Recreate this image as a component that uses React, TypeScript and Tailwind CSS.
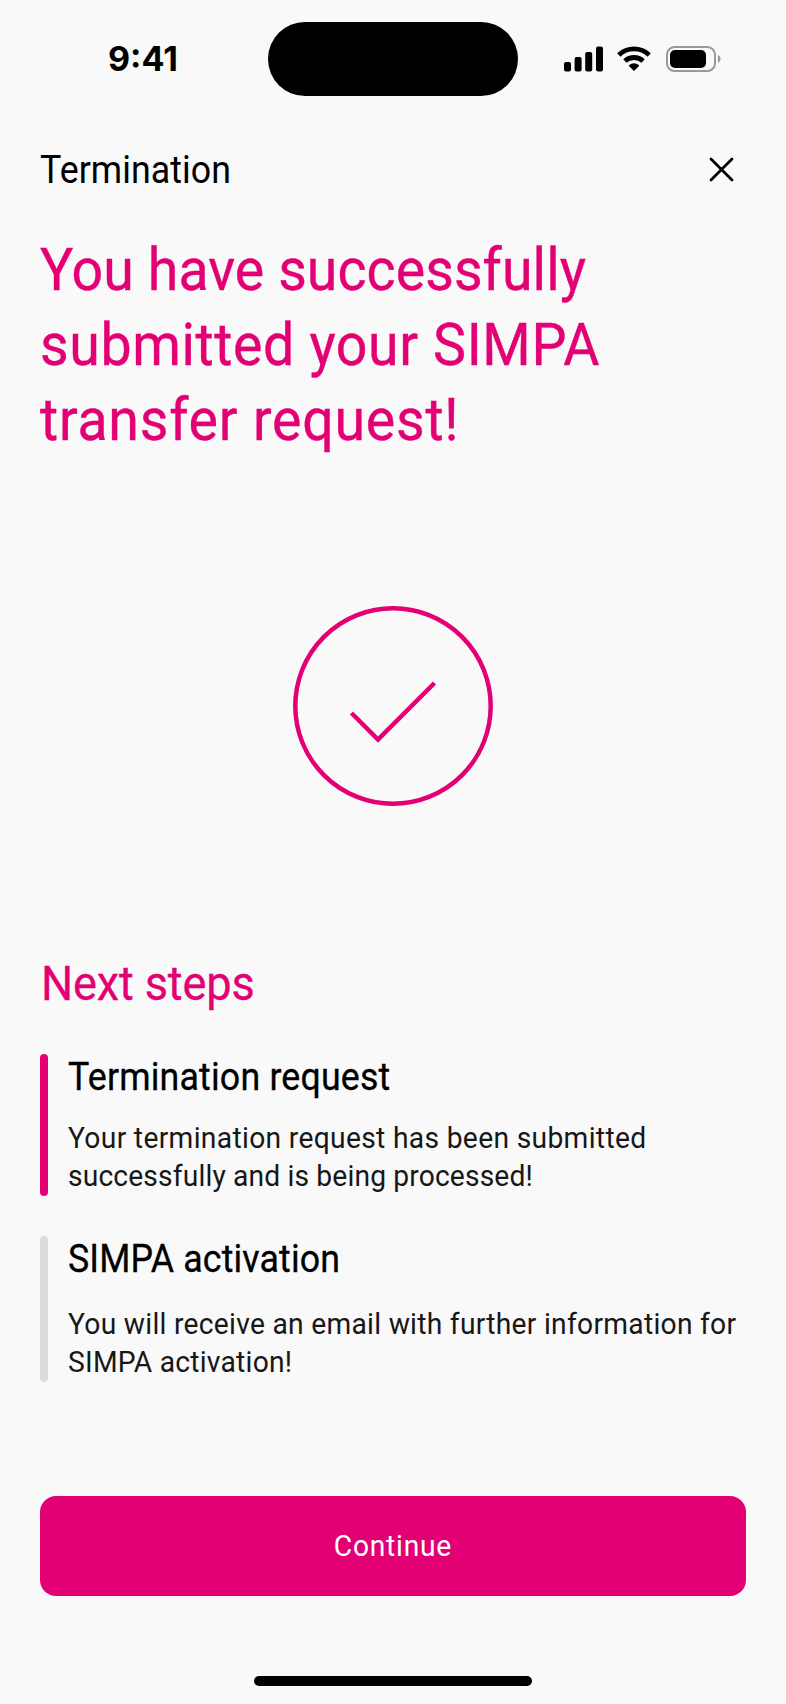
import type { ReactNode } from "react";

function Line({ className = "", children }: { className?: string; children: ReactNode }) {
  return (
    <span className={`block w-max origin-left scale-x-94 whitespace-nowrap ${className}`}>
      {children}
    </span>
  );
}

function SignalIcon() {
  return (
    <svg width="39" height="26" viewBox="0 0 39 26" fill="currentColor" aria-hidden="true">
      <rect x="0" y="16" width="7" height="9.5" rx="2" />
      <rect x="10.6" y="11" width="7" height="14.5" rx="2" />
      <rect x="21.2" y="6" width="7" height="19.5" rx="2" />
      <rect x="32" y="0.5" width="7" height="25" rx="2" />
    </svg>
  );
}

function WifiIcon() {
  return (
    <svg width="34" height="26" viewBox="0 0 34 26" aria-hidden="true">
      <g fill="none" stroke="currentColor" strokeWidth="4.8">
        <path d="M1.8 8.9 A22.4 22.4 0 0 1 32.2 8.9" />
        <path d="M7.9 15 A13.6 13.6 0 0 1 26.1 15" />
      </g>
      <path
        d="M17 25 L12.2 20.3 C11.8 19.9 11.9 19.4 12.3 19.1 A7.2 7.2 0 0 1 21.7 19.1 C22.1 19.4 22.2 19.9 21.8 20.3 Z"
        fill="currentColor"
      />
    </svg>
  );
}

function BatteryIcon() {
  return (
    <svg width="56" height="26" viewBox="0 0 56 26" aria-hidden="true">
      <rect x="1" y="1" width="48" height="24" rx="7.6" fill="none" stroke="#999" strokeWidth="2" />
      <rect x="4" y="4" width="36" height="18" rx="5" fill="#000" />
      <path d="M52 9 A4.4 4.4 0 0 1 52 17 Z" fill="#999" />
    </svg>
  );
}

function StatusBar() {
  return (
    <div className="flex h-[118px] items-center text-black">
      <div className="w-[268px] pl-[108px] font-['Inter',sans-serif] text-[34px] leading-none font-bold">
        9:41
      </div>
      <div className="h-[74px] w-[250px] rounded-full bg-black" />
      <div className="ml-[46px] flex items-center">
        <SignalIcon />
        <span className="ml-[14px]">
          <WifiIcon />
        </span>
        <span className="ml-[15px]">
          <BatteryIcon />
        </span>
      </div>
    </div>
  );
}

function Step({ active = false, title, children }: { active?: boolean; title: ReactNode; children: ReactNode }) {
  return (
    <section className="flex gap-5">
      <div className={`w-2 shrink-0 rounded-full ${active ? "bg-[#e20074]" : "bg-[#dcdcdc]"}`} />
      <div className={active ? "h-[142px]" : "h-[146px]"}>
        <h3 className="text-[38px] leading-[46px] text-black [-webkit-text-stroke:0.3px]">{title}</h3>
        <p className={`text-[30px] leading-[38px] text-[#171717] ${active ? "mt-[19px]" : "mt-[23px]"}`}>
          {children}
        </p>
      </div>
    </section>
  );
}

export default function App() {
  return (
    <div className="flex h-[1704px] w-[786px] flex-col overflow-hidden bg-[#f9f9f9] font-['Roboto',sans-serif]">
      <StatusBar />

      <header className="flex h-[102px] items-center justify-between pr-[51px] pl-10">
        <Line className="pt-0.5 text-[38px] tracking-[0.07px] text-black">Termination</Line>
        <button type="button" aria-label="Close">
          <svg width="27" height="27" viewBox="0 0 27 27" fill="none" stroke="#000" strokeWidth="2.8" strokeLinecap="round">
            <path d="M3 3 L24 24 M24 3 L3 24" />
          </svg>
        </button>
      </header>

      <main className="flex flex-col px-10">
        <h1 className="mt-3 text-[59px] leading-[75px] text-[#e20074] [-webkit-text-stroke:0.4px]">
          <Line className="tracking-[0.08px]">You have successfully</Line>
          <Line className="tracking-[0.66px]">submitted your SIMPA</Line>
          <Line className="tracking-[0.83px]">transfer request!</Line>
        </h1>

        <svg
          className="mt-[149px] self-center"
          width="200"
          height="200"
          viewBox="0 0 200 200"
          fill="none"
          stroke="#e20074"
          strokeWidth="4.5"
        >
          <circle cx="100" cy="100" r="97.7" />
          <path d="M58.5 107 L85 133.5 L141.5 77" />
        </svg>

        <h2 className="mt-[154px] text-[48px] leading-[48px] text-[#e20074] [-webkit-text-stroke:0.3px]">
          <Line className="pl-px tracking-[-0.15px]">Next steps</Line>
        </h2>

        <div className="mt-[46px] flex flex-col gap-10">
          <Step active title={<Line className="tracking-[0.2px]">Termination request</Line>}>
            <Line className="tracking-[0.35px]">Your termination request has been submitted</Line>
            <Line className="tracking-[0.16px]">successfully and is being processed!</Line>
          </Step>
          <Step title={<Line className="tracking-[0.15px]">SIMPA activation</Line>}>
            <Line className="tracking-[0.3px]">You will receive an email with further information for</Line>
            <Line className="tracking-[0.25px]">SIMPA activation!</Line>
          </Step>
        </div>

        <button
          type="button"
          className="mt-[114px] flex h-[100px] items-center justify-center rounded-2xl bg-[#e20074] text-[30px] text-white"
        >
          <span className="scale-x-94 pb-0.5 tracking-[0.8px]">Continue</span>
        </button>
      </main>

      <div className="mt-20 h-[10px] w-[278px] self-center rounded-full bg-black" />
    </div>
  );
}
